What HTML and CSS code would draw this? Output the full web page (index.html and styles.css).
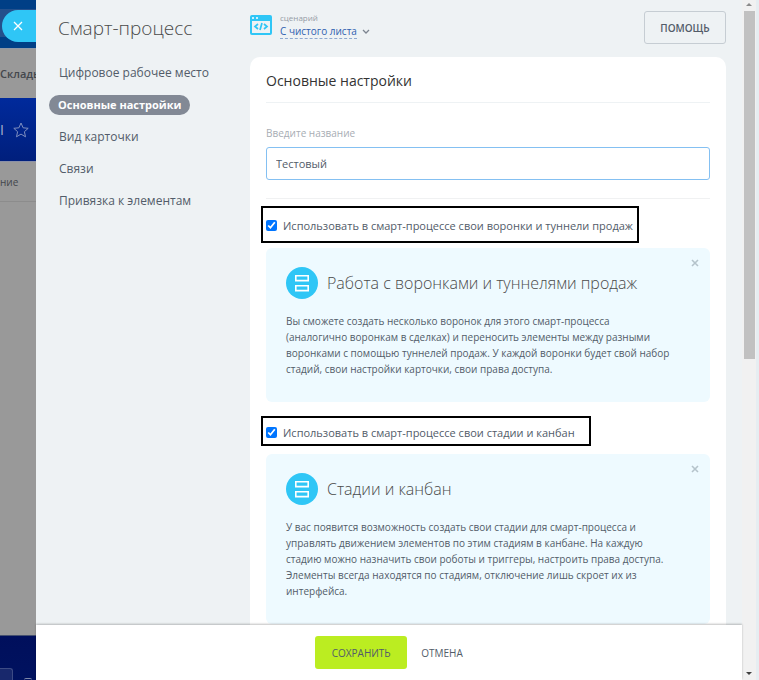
FILE: index.html
```html
<!DOCTYPE html>
<html lang="ru">
<head>
<meta charset="UTF-8">
<meta name="viewport" content="width=device-width, initial-scale=1.0">
<title>Смарт-процесс</title>
<link rel="stylesheet" href="styles.css">
</head>
<body>
    <!-- Dimmed page behind the slider -->
    <div class="backdrop">
        <div class="strip strip-top">
            <button class="slider-close" type="button" aria-label="Закрыть">
                <svg width="10" height="10" viewBox="0 0 10 10"><path d="M1 1l8 8M9 1l-8 8" stroke="#fff" stroke-width="1.3"/></svg>
            </button>
        </div>
        <div class="strip strip-tabs">Склады</div>
        <div class="strip strip-title">
            <span>I</span>
            <svg width="16" height="16" viewBox="0 0 16 16"><path d="M8 1l2.1 4.8 5.1.5-3.8 3.4 1.1 5.1L8 12.1l-4.5 2.7 1.1-5.1L.8 6.3l5.1-.5z" fill="none" stroke="#7f8fc0"/></svg>
        </div>
        <div class="strip strip-sub">ние</div>
        <div class="strip strip-body"></div>
        <div class="strip strip-bottom">
            <span class="corner"></span>
            <span class="ring"></span>
        </div>
    </div>

    <div class="slider">
        <div class="content">
            <!-- Left menu -->
            <div class="sidebar">
                <h1>Смарт-процесс</h1>
                <nav class="menu">
                    <a href="#workplace">Цифровое рабочее место</a>
                    <a href="#common" class="active">Основные настройки</a>
                    <a href="#card">Вид карточки</a>
                    <a href="#relations">Связи</a>
                    <a href="#binding">Привязка к элементам</a>
                </nav>
            </div>

            <div class="main">
                <div class="toolbar">
                    <svg class="preset-icon" width="22" height="20" viewBox="0 0 22 20">
                        <rect x="0" y="0" width="22" height="20" rx="2" fill="#2fc6f6"/>
                        <rect x="2" y="6" width="18" height="12" fill="#eef2f4"/>
                        <rect x="2" y="2" width="2" height="2" rx="1" fill="#fff"/>
                        <rect x="6" y="2" width="2" height="2" rx="1" fill="#fff"/>
                        <path d="M8 9l-3 2.5 3 2.5M14 9l3 2.5-3 2.5M12 8l-2 7" fill="none" stroke="#2fc6f6" stroke-width="1.7"/>
                    </svg>
                    <div class="preset">
                        <span class="preset-label">сценарий</span>
                        <a href="#preset" class="preset-link"><span>С чистого листа</span>
                            <svg width="8" height="6" viewBox="0 0 8 6"><path d="M1 1l3 3 3-3" fill="none" stroke="#7d8590" stroke-width="1.3"/></svg>
                        </a>
                    </div>
                    <button class="help" type="button">ПОМОЩЬ</button>
                </div>

                <form class="card" id="settings">
                    <h2>Основные настройки</h2>
                    <div class="field">
                        <label for="title">Введите название</label>
                        <input type="text" id="title" value="Тестовый">
                    </div>

                    <label class="option option-funnels">
                        <input type="checkbox" checked>
                        <span>Использовать в смарт-процессе свои воронки и туннели продаж</span>
                    </label>
                    <div class="hint">
                        <button class="hint-close" type="button" aria-label="Скрыть">
                            <svg width="8" height="8" viewBox="0 0 8 8"><path d="M1 1l6 6M7 1l-6 6" stroke="#b5c3cb" stroke-width="1.6"/></svg>
                        </button>
                        <h3>
                            <svg width="32" height="32" viewBox="0 0 32 32">
                                <circle cx="16" cy="16" r="16" fill="#2fc6f6"/>
                                <path d="M9.8 8.800h12.400v4.800H9.800zM9.800 18.800h12.400v4.800H9.800z" fill="none" stroke="#fff" stroke-width="1.6"/>
                            </svg>
                            Работа с воронками и туннелями продаж
                        </h3>
                        <p>Вы сможете создать несколько воронок для этого смарт-процесса<br>(аналогично воронкам в сделках) и переносить элементы между разными воронками с помощью туннелей продаж. У каждой воронки будет свой набор стадий, свои настройки карточки, свои права доступа.</p>
                    </div>

                    <label class="option option-stages">
                        <input type="checkbox" checked>
                        <span>Использовать в смарт-процессе свои стадии и канбан</span>
                    </label>
                    <div class="hint">
                        <button class="hint-close" type="button" aria-label="Скрыть">
                            <svg width="8" height="8" viewBox="0 0 8 8"><path d="M1 1l6 6M7 1l-6 6" stroke="#b5c3cb" stroke-width="1.6"/></svg>
                        </button>
                        <h3>
                            <svg width="32" height="32" viewBox="0 0 32 32">
                                <circle cx="16" cy="16" r="16" fill="#2fc6f6"/>
                                <path d="M9.8 8.800h12.400v4.800H9.800zM9.800 18.800h12.400v4.800H9.800z" fill="none" stroke="#fff" stroke-width="1.6"/>
                            </svg>
                            Стадии и канбан
                        </h3>
                        <p>У вас появится возможность создать свои стадии для смарт-процесса и управлять движением элементов по этим стадиям в канбане. На каждую стадию можно назначить свои роботы и триггеры, настроить права доступа. Элементы всегда находятся по стадиям, отключение лишь скроет их из интерфейса.</p>
                    </div>
                </form>
            </div>
        </div>

        <!-- Save / cancel -->
        <div class="footer">
            <button class="save" type="submit" form="settings">СОХРАНИТЬ</button>
            <button class="cancel" type="button">ОТМЕНА</button>
        </div>
    </div>

    <!-- Scrollbar -->
    <div class="scrollbar">
        <svg width="6" height="4" viewBox="0 0 6 4"><path d="M0 4l3-3 3 3z" fill="#8a8a8a"/></svg>
        <div class="track"><div class="thumb"></div></div>
        <svg width="6" height="4" viewBox="0 0 6 4"><path d="M0 0h6l-3 3z" fill="#404040"/></svg>
    </div>
</body>
</html>
```

FILE: styles.css
```css
* {
    box-sizing: border-box;
}

body {
    display: flex;
    height: 100vh;
    margin: 0;
    overflow: hidden;
    background-color: #eef2f4;
    color: #525c69;
    font-family: "Open Sans", "Noto Sans", sans-serif;
    font-size: 11px;
}

h1, h2, h3, p {
    margin: 0;
}

h1, h2, h3 {
    color: #4a4a4a;
    font-weight: 300;
}

button {
    padding: 0;
    border: none;
    background: none;
    color: #525c69;
    font-family: inherit;
    font-size: 10px;
    cursor: pointer;
}

svg {
    display: block;
    flex: none;
}

/* Dimmed page on the left */
.backdrop {
    display: flex;
    flex-direction: column;
    width: 36px;
    flex: none;
    overflow: hidden;
}

.strip {
    display: flex;
    align-items: center;
    flex: none;
    overflow: hidden;
    color: #43474c;
    white-space: nowrap;
}

.strip-top {
    height: 49px;
    padding: 4px 0 0 2px;
    background: linear-gradient(#003f86 9px, #24508c 9px, #24508c 37px, #003f86 37px);
    border-bottom: 1px solid #8e99a8;
}

.strip-tabs {
    height: 49px;
    background-color: #999;
    font-weight: 600;
}

.strip-title {
    height: 64px;
    gap: 9px;
    background: linear-gradient(#002a9c, #001f7c);
    border-bottom: 1px solid #8a90a8;
    color: #a9b1cc;
    font-size: 14px;
}

.strip-sub {
    height: 40px;
    background-color: #999;
    border-bottom: 1px solid #8c8c8c;
    font-size: 10px;
}

.strip-body {
    flex: 1;
    background-color: #999;
}

.strip-bottom {
    align-items: flex-end;
    gap: 11px;
    height: 45px;
    background: linear-gradient(#000f5c, #00125f);
    border-top: 1px solid #45506f;
}

.corner {
    width: 13px;
    height: 12px;
    background-color: #18286c;
    border: 1px solid #3d4b85;
    border-width: 1px 1px 0 0;
    border-radius: 0 3px 0 0;
}

.ring {
    width: 8px;
    height: 2px;
    border-top: 1px solid #7f88a8;
    border-radius: 4px 4px 0 0;
}

.slider-close {
    display: flex;
    align-items: center;
    width: 34px;
    height: 32px;
    padding-left: 11px;
    background-color: #2fc6f6;
    border-radius: 16px 0 0 16px;
}

/* Slider */
.slider {
    display: flex;
    flex-direction: column;
    flex: 1;
    min-width: 0;
}

.content {
    display: flex;
    flex: 1;
    min-height: 0;
    overflow: hidden;
}

.sidebar {
    width: 214px;
    flex: none;
    padding: 14px 0 0 13px;
}

.sidebar h1 {
    padding-left: 9px;
    font-size: 19px;
    line-height: 29px;
}

.menu {
    display: flex;
    flex-direction: column;
    align-items: flex-start;
    gap: 12px;
    margin-top: 20px;
}

.menu a {
    padding: 0 10px;
    border-radius: 10px;
    color: #525c69;
    font-size: 12px;
    line-height: 20px;
    text-decoration: none;
}

.menu .active {
    padding: 0 8px 0 9px;
    background-color: #828995;
    color: #fff;
    font-size: 11px;
    font-weight: 700;
}

.main {
    flex: 1;
    min-width: 0;
    padding: 11px 16px 0 0;
}

.toolbar {
    display: flex;
    align-items: flex-start;
}

.preset-icon {
    margin-top: 4px;
}

.preset {
    display: flex;
    flex-direction: column;
    padding-left: 8px;
}

.preset-label {
    color: #959ca5;
    font-size: 8px;
    line-height: 14px;
}

.preset-link {
    display: flex;
    align-items: center;
    gap: 5px;
    color: #2f60b0;
    font-size: 10px;
    line-height: 13px;
    text-decoration: none;
}

.preset-link span {
    border-bottom: 1px dashed #8fa9d0;
}

.help {
    width: 82px;
    height: 33px;
    margin-left: auto;
    border: 1px solid #c6cdd3;
    border-radius: 3px;
    font-weight: 600;
}

/* Settings card */
.card {
    margin-top: 13px;
    padding: 0 16px 16px;
    background-color: #fff;
    border-radius: 10px;
}

.card h2 {
    margin-bottom: 22px;
    padding-top: 3px;
    border-bottom: 1px solid #eef2f4;
    color: #333;
    font-size: 14px;
    font-weight: 400;
    line-height: 42px;
}

.field {
    padding-bottom: 18px;
    border-bottom: 1px solid #f0f1f2;
}

.field label {
    display: block;
    margin-bottom: 6px;
    color: #a8adb4;
    font-size: 10px;
    line-height: 16px;
}

.field input {
    display: block;
    width: 100%;
    height: 33px;
    padding: 0 9px;
    border: 1px solid #84c0f2;
    border-radius: 3px;
    outline: none;
    color: #525c69;
    font-family: inherit;
    font-size: 11px;
}

.option {
    display: flex;
    align-items: center;
    gap: 6px;
    width: fit-content;
    margin-left: -5px;
    border: 2px solid #000;
    white-space: nowrap;
}

.option input {
    width: 11px;
    height: 11px;
    margin: 0;
    accent-color: #0075ff;
}

.option-funnels {
    height: 37px;
    margin-top: 7px;
    padding: 2px 4px 0 3px;
}

.option-stages {
    height: 30px;
    margin-top: 14px;
    padding: 2px 14px 0 3px;
}

/* Light blue hints */
.hint {
    position: relative;
    margin-top: 5px;
    padding: 19px 30px 25px 20px;
    background-color: #eefaff;
    border-radius: 6px;
}

.option-stages + .hint {
    margin-top: 8px;
}

.hint-close {
    position: absolute;
    top: 11px;
    right: 11px;
}

.hint h3 {
    display: flex;
    align-items: center;
    gap: 9px;
    font-size: 16px;
    line-height: 32px;
    white-space: nowrap;
}

.hint p {
    margin-top: 14px;
    font-size: 10px;
    line-height: 16px;
}

/* Footer */
.footer {
    position: relative;
    display: flex;
    align-items: center;
    justify-content: center;
    gap: 14px;
    height: 55px;
    flex: none;
    background-color: #fff;
    box-shadow: 0 -1px 2px rgba(0, 0, 0, 0.25);
}

.save {
    width: 92px;
    height: 33px;
    background-color: #bbed21;
    border-radius: 3px;
}

/* Scrollbar */
.scrollbar {
    display: flex;
    flex-direction: column;
    align-items: center;
    width: 17px;
    flex: none;
    padding: 2px 0 4px;
    background-color: #f1f1f1;
    border-right: 3px solid #e6edf1;
}

.track {
    flex: 1;
    width: 11px;
    margin: 5px 0;
}

.thumb {
    height: 53%;
    background-color: #c1c1c1;
}
```
